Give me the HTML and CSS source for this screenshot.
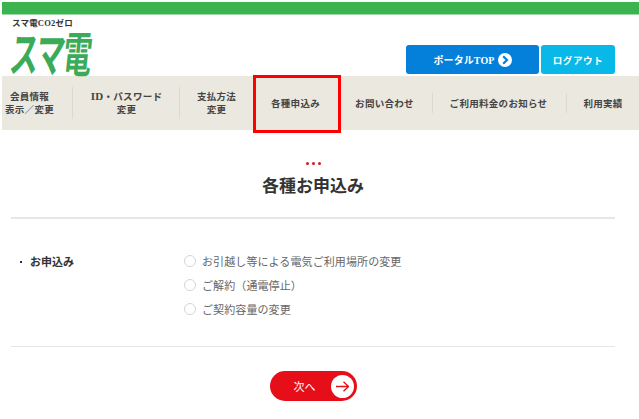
FILE: index.html
```html
<!DOCTYPE html>
<html lang="ja">
    <head>
        <meta charset="UTF-8">
        <meta name="viewport" content="width=device-width, initial-scale=1.0">
        <title>各種お申込み</title>
        <link rel="stylesheet" href="styles.css">
    </head>
    <body>
        <div class="top-bar"></div>
        <header class="header">
            <div class="brand">
                <div class="brand-sub">スマ電CO2ゼロ</div>
                <div class="brand-logo">スマ電</div>
            </div>
            <div class="header-buttons">
                <a class="btn-portal">ポータルTOP
                    <svg class="chevron" width="14" height="14" viewBox="0 0 14 14">
                        <circle cx="7" cy="7" r="7" fill="#fff"/>
                        <path d="M5.2 3.2 L9 7 L5.2 10.8" fill="none" stroke="#0480db" stroke-width="2.2"/>
                    </svg>
                </a>
                <a class="btn-logout">ログアウト</a>
            </div>
        </header>
        <nav class="nav">
            <a class="nav-item nav-first"><span>会員情報<br>表示／変更</span></a>
            <a class="nav-item nav-id"><span><span class="latin">ID</span>・パスワード<br>変更</span></a>
            <a class="nav-item nav-pay"><span>支払方法<br>変更</span></a>
            <a class="nav-item nav-apply"><span>各種申込み</span><span class="highlight"></span></a>
            <a class="nav-item nav-contact"><span>お問い合わせ</span></a>
            <a class="nav-item nav-notice"><span>ご利用料金のお知らせ</span></a>
            <a class="nav-item nav-usage"><span>利用実績</span></a>
        </nav>
        <main class="main">
            <div class="dots"><span></span><span></span><span></span></div>
            <h1 class="title">各種お申込み</h1>
            <div class="form-row">
                <div class="form-label">お申込み</div>
                <div class="options">
                    <label class="option"><span class="radio"></span>お引越し等による電気ご利用場所の変更</label>
                    <label class="option"><span class="radio"></span>ご解約（通電停止）</label>
                    <label class="option"><span class="radio"></span>ご契約容量の変更</label>
                </div>
            </div>
            <div class="actions">
                <a class="btn-next">
                    <span class="btn-next-text">次へ</span>
                    <span class="btn-next-icon">
                        <svg width="13" height="11" viewBox="0 0 13 11">
                            <path d="M0 5.5 H12.5 M7.5 0.8 L12.5 5.5 L7.5 10.2" fill="none" stroke="#e60f19" stroke-width="1.3"/>
                        </svg>
                    </span>
                </a>
            </div>
        </main>
    </body>
</html>
```

FILE: styles.css
```css
* {
    box-sizing: border-box;
}

body {
    margin: 0;
    height: 419px;
    overflow: hidden;
    background-color: #fff;
    color: #333;
    font-family: "Noto Sans CJK JP", sans-serif;
}

.top-bar {
    height: 13px;
    margin: 2px 0 0 2px;
    background-color: #3bb44f;
    border-bottom: 1px solid #9fd9a9;
}

.header {
    display: flex;
    justify-content: space-between;
    height: 61px;
    padding: 0 24px 0 12px;
}

.brand-sub {
    margin-top: 2px;
    font-family: "Liberation Serif", "Noto Sans CJK JP", serif;
    font-size: 8.5px;
    font-weight: bold;
    line-height: 12px;
    letter-spacing: 0.2px;
}

.brand-logo {
    width: 78px;
    margin: -2px 0 0 -4px;
    color: #3bab59;
    font-size: 48px;
    font-weight: 700;
    line-height: 48px;
    letter-spacing: -3px;
    white-space: nowrap;
    transform: scaleX(0.6) skewX(-10deg);
    transform-origin: left bottom;
}

.header-buttons {
    display: flex;
    gap: 2px;
    margin-top: 30px;
    height: 29px;
}

.btn-portal,
.btn-logout {
    display: flex;
    align-items: center;
    justify-content: center;
    border-radius: 3px;
    color: #fff;
    font-size: 9.5px;
    font-weight: bold;
}

.btn-portal {
    gap: 3px;
    width: 133px;
    background-color: #0480db;
    font-family: "Liberation Serif", "Noto Sans CJK JP", serif;
    font-size: 10px;
    letter-spacing: 0.1px;
}

.btn-logout {
    width: 74px;
    background-color: #08b8e8;
    letter-spacing: 0.6px;
}

.nav {
    display: flex;
    align-items: center;
    height: 54px;
    margin-left: 2px;
    background-color: #ebe8df;
}

.nav-item {
    position: relative;
    display: flex;
    align-items: center;
    justify-content: center;
    height: 100%;
    flex: none;
    color: #444;
    font-size: 9.5px;
    font-weight: bold;
    line-height: 13px;
    letter-spacing: 0.3px;
    text-align: center;
}

.nav-item::after {
    content: "";
    position: absolute;
    right: 0;
    top: 11px;
    bottom: 11px;
    width: 1px;
    background-color: #dcd9d0;
}

.nav-first { width: 71px; padding-right: 16px; }
.nav-id { width: 107px; }
.nav-pay { width: 73px; }
.nav-apply { width: 88px; padding-right: 3px; }
.nav-contact { width: 92px; padding-right: 5px; }
.nav-notice { width: 134px; padding-right: 3px; }
.nav-usage { width: 72px; }

.nav-contact::after,
.nav-notice::after {
    top: 17px;
    bottom: 17px;
}

.nav-pay::after,
.nav-apply::after,
.nav-usage::after {
    display: none;
}

.latin {
    font-family: "Liberation Serif", serif;
    font-size: 11px;
}

.highlight {
    position: absolute;
    left: 0;
    top: -1px;
    width: 88px;
    height: 58px;
    border: 3px solid #f00;
}

.main {
    padding: 0 24px 0 11px;
}

.dots {
    display: flex;
    justify-content: center;
    gap: 3px;
    margin-top: 32px;
    height: 3px;
}

.dots span {
    width: 3px;
    height: 3px;
    border-radius: 50%;
    background-color: #e60f19;
}

.title {
    margin: 7px 0 0;
    padding-bottom: 20px;
    border-bottom: 2px solid #e6e6e6;
    font-size: 17px;
    font-weight: bold;
    line-height: 25px;
    text-align: center;
}

.form-row {
    display: flex;
    padding: 30px 0 25px;
    border-bottom: 1px solid #e6e6e6;
}

.form-label {
    position: relative;
    width: 173px;
    padding-left: 19px;
    font-size: 11px;
    font-weight: bold;
    line-height: 24px;
}

.form-label::before {
    content: "";
    position: absolute;
    left: 9px;
    top: 12px;
    width: 2px;
    height: 2px;
    background-color: #333;
}

.option {
    display: flex;
    align-items: center;
    gap: 6px;
    height: 24px;
    color: #666;
    font-size: 11px;
    letter-spacing: 0.1px;
}

.radio {
    width: 12px;
    height: 12px;
    border: 1px solid #d5d5d5;
    border-radius: 50%;
}

.actions {
    display: flex;
    justify-content: center;
    padding-top: 24px;
}

.btn-next {
    display: flex;
    align-items: center;
    justify-content: space-between;
    width: 87px;
    height: 30px;
    padding: 0 3px 0 24px;
    border-radius: 15px;
    background-color: #e60f19;
    color: #fff;
    font-size: 11px;
}

.btn-next-icon {
    display: flex;
    align-items: center;
    justify-content: center;
    width: 23px;
    height: 23px;
    border-radius: 50%;
    background-color: #fff;
}
```
